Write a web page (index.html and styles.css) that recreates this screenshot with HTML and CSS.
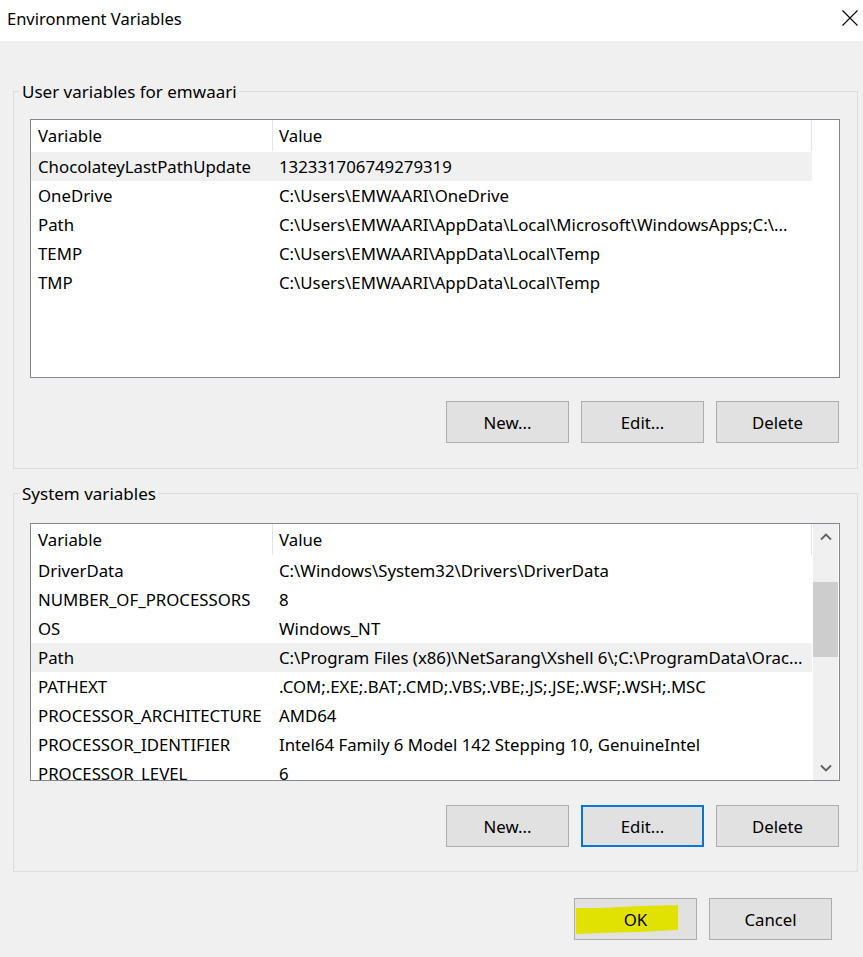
FILE: index.html
```html
<!DOCTYPE html>
<html>
<head>
<meta charset="utf-8">
<title>Environment Variables</title>
<link rel="stylesheet" href="styles.css">
</head>
<body>
<div class="window">
  <div class="titlebar">
    <span class="title">Environment Variables</span>
    <span class="close">
      <svg width="16" height="16" viewBox="0 0 16 16"><path d="M0.5 0.5 L15.5 15.5 M15.5 0.5 L0.5 15.5" stroke="#000" stroke-width="1.1" fill="none"/></svg>
    </span>
  </div>

  <fieldset class="group group-user">
    <legend>User variables for emwaari</legend>
    <div class="group-inner inner-user">
      <div class="list">
        <div class="table">
          <div class="row head"><div class="c1 hc">Variable</div><div class="c2 hc">Value</div></div>
          <div class="row sel"><div class="c1">ChocolateyLastPathUpdate</div><div class="c2">132331706749279319</div></div>
          <div class="row"><div class="c1">OneDrive</div><div class="c2">C:\Users\EMWAARI\OneDrive</div></div>
          <div class="row"><div class="c1">Path</div><div class="c2">C:\Users\EMWAARI\AppData\Local\Microsoft\WindowsApps;C:\...</div></div>
          <div class="row"><div class="c1">TEMP</div><div class="c2">C:\Users\EMWAARI\AppData\Local\Temp</div></div>
          <div class="row"><div class="c1">TMP</div><div class="c2">C:\Users\EMWAARI\AppData\Local\Temp</div></div>
        </div>
      </div>
      <div class="buttons">
        <div class="btn">New...</div>
        <div class="btn">Edit...</div>
        <div class="btn">Delete</div>
      </div>
    </div>
  </fieldset>

  <fieldset class="group group-sys">
    <legend>System variables</legend>
    <div class="group-inner inner-sys">
      <div class="list list-sys">
        <div class="table">
          <div class="row head"><div class="c1 hc">Variable</div><div class="c2 hc">Value</div></div>
          <div class="row"><div class="c1">DriverData</div><div class="c2">C:\Windows\System32\Drivers\DriverData</div></div>
          <div class="row"><div class="c1">NUMBER_OF_PROCESSORS</div><div class="c2">8</div></div>
          <div class="row"><div class="c1">OS</div><div class="c2">Windows_NT</div></div>
          <div class="row sel"><div class="c1">Path</div><div class="c2">C:\Program Files (x86)\NetSarang\Xshell 6\;C:\ProgramData\Orac...</div></div>
          <div class="row"><div class="c1">PATHEXT</div><div class="c2">.COM;.EXE;.BAT;.CMD;.VBS;.VBE;.JS;.JSE;.WSF;.WSH;.MSC</div></div>
          <div class="row"><div class="c1">PROCESSOR_ARCHITECTURE</div><div class="c2">AMD64</div></div>
          <div class="row"><div class="c1">PROCESSOR_IDENTIFIER</div><div class="c2">Intel64 Family 6 Model 142 Stepping 10, GenuineIntel</div></div>
          <div class="row"><div class="c1">PROCESSOR_LEVEL</div><div class="c2">6</div></div>
        </div>
        <div class="scrollbar">
          <div class="arrow"><svg width="12" height="8" viewBox="0 0 12 8"><path d="M1 6.5 L6 1.5 L11 6.5" stroke="#606060" stroke-width="1.8" fill="none"/></svg></div>
          <div class="track"><div class="thumb"></div></div>
          <div class="arrow"><svg width="12" height="8" viewBox="0 0 12 8"><path d="M1 1.5 L6 6.5 L11 1.5" stroke="#606060" stroke-width="1.8" fill="none"/></svg></div>
        </div>
      </div>
      <div class="buttons">
        <div class="btn">New...</div>
        <div class="btn focus">Edit...</div>
        <div class="btn">Delete</div>
      </div>
    </div>
  </fieldset>

  <div class="footer">
    <div class="btn ok">
      <svg class="marker" width="123" height="42" viewBox="0 0 123 42"><polygon points="2,10 26,10 66,8 104,7 104,32 66,34 26,35 2,36" fill="#e2e200"/></svg>
      <span class="label">OK</span>
    </div>
    <div class="btn">Cancel</div>
  </div>
</div>
</body>
</html>
```

FILE: styles.css
```css
html, body {
  margin: 0;
  padding: 0;
}
body {
  width: 863px;
  height: 957px;
  background: #f0f0f0;
  font-family: "Noto Sans", "Open Sans", sans-serif;
  font-size: 16.8px;
  color: #000;
  overflow: hidden;
}
.window {
  width: 863px;
  height: 957px;
  background: #f0f0f0;
}
.titlebar {
  height: 41px;
  background: #fff;
  display: flex;
  align-items: flex-start;
  justify-content: space-between;
  box-sizing: border-box;
  padding: 0 5px 0 7px;
}
.title {
  font-size: 16.5px;
  line-height: 22px;
  padding-top: 8px;
}
.close {
  padding-top: 10px;
  width: 16px;
  height: 16px;
}
.close svg {
  display: block;
}
.group {
  margin: 39px 5px 0 13px;
  padding: 0;
  border: 1px solid #dcdcdc;
  min-width: 0;
}
.group-sys {
  margin-top: 13px;
}
.group legend {
  margin-left: 6px;
  padding: 2px 2px 0;
  line-height: 20px;
  font-size: 17px;
}
.group-inner {
  padding: 17px 17px 25px 16px;
}
.inner-sys {
  padding-top: 19px;
  padding-bottom: 24px;
}
.list {
  height: 259px;
  box-sizing: border-box;
  border: 1px solid #828790;
  background: #fff;
  display: flex;
  overflow: hidden;
}
.list-sys {
  height: 258px;
}
.table {
  width: 781px;
  flex: none;
}
.row {
  display: flex;
  height: 29px;
  align-items: center;
  white-space: nowrap;
}
.row.head {
  height: 32px;
  align-items: stretch;
}
.row.sel {
  background: #f0f0f0;
}
.c1 {
  width: 242px;
  box-sizing: border-box;
  padding-left: 7px;
  overflow: hidden;
}
.c2 {
  width: 539px;
  box-sizing: border-box;
  padding-left: 6px;
  overflow: hidden;
}
.hc {
  display: flex;
  align-items: center;
  border-right: 1px solid #e5e5e5;
  margin-bottom: 1px;
}
.scrollbar {
  width: 25px;
  margin-left: auto;
  margin-right: 1px;
  background: #f0f0f0;
  display: flex;
  flex-direction: column;
}
.arrow {
  height: 25px;
  display: flex;
  align-items: center;
  justify-content: center;
}
.arrow svg {
  display: block;
}
.track {
  flex: 1;
}
.thumb {
  margin-top: 33px;
  height: 75px;
  background: #cdcdcd;
}
.buttons {
  display: flex;
  justify-content: flex-end;
  gap: 12px;
  margin-top: 23px;
  margin-right: 1px;
}
.inner-sys .buttons {
  margin-top: 24px;
}
.btn {
  width: 123px;
  height: 42px;
  box-sizing: border-box;
  border: 1px solid #adadad;
  background: #e1e1e1;
  display: flex;
  align-items: center;
  justify-content: center;
  position: relative;
}
.btn.focus {
  border: 2px solid #0078d7;
}
.footer {
  display: flex;
  justify-content: flex-end;
  gap: 12px;
  padding-right: 31px;
  margin-top: 26px;
}
.marker {
  position: absolute;
  left: -1px;
  top: -1px;
}
.label {
  position: relative;
}
```
